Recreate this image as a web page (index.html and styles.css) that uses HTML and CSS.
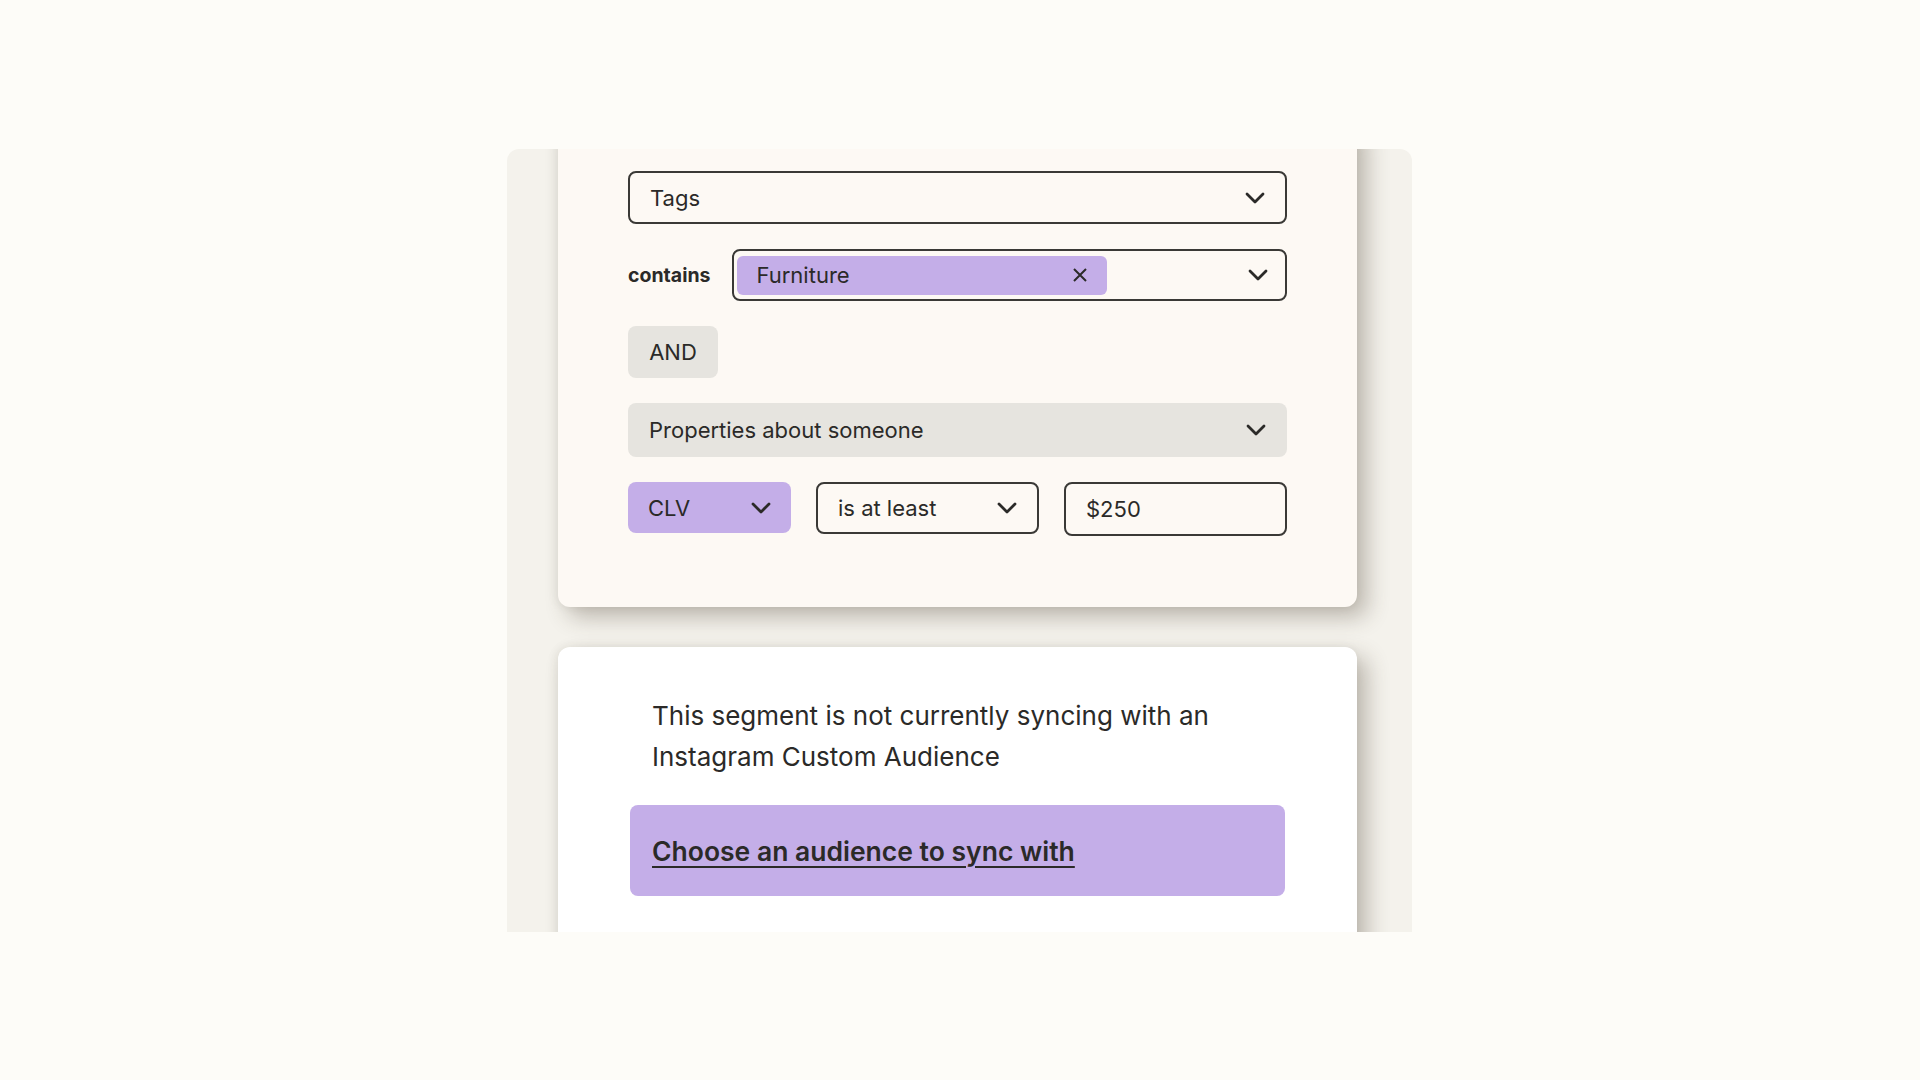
FILE: index.html
```html
<!DOCTYPE html>
<html lang="en">
<head>
<meta charset="utf-8">
<title>Segment builder</title>
<link rel="stylesheet" href="styles.css">
</head>
<body>
<div class="panel">
  <section class="card card-rules">
    <div class="select select-outline">
      <span class="select-label">Tags</span>
      <svg class="chev" viewBox="0 0 20 12"><path d="M2 2 L10 10 L18 2"/></svg>
    </div>
    <div class="contains-row">
      <span class="contains">contains</span>
      <div class="select select-outline select-chips">
        <span class="chip">
          <span class="chip-label">Furniture</span>
          <svg class="chip-x" viewBox="0 0 16 16"><path d="M2 2 L14 14 M14 2 L2 14"/></svg>
        </span>
        <svg class="chev" viewBox="0 0 20 12"><path d="M2 2 L10 10 L18 2"/></svg>
      </div>
    </div>
    <div class="and-row"><span class="and-btn">AND</span></div>
    <div class="select select-gray">
      <span class="select-label">Properties about someone</span>
      <svg class="chev" viewBox="0 0 20 12"><path d="M2 2 L10 10 L18 2"/></svg>
    </div>
    <div class="cond-row">
      <div class="select select-purple">
        <span class="select-label">CLV</span>
        <svg class="chev" viewBox="0 0 20 12"><path d="M2 2 L10 10 L18 2"/></svg>
      </div>
      <div class="select select-outline">
        <span class="select-label">is at least</span>
        <svg class="chev" viewBox="0 0 20 12"><path d="M2 2 L10 10 L18 2"/></svg>
      </div>
      <div class="input select-outline">
        <span class="select-label">$250</span>
      </div>
    </div>
  </section>
  <section class="card card-sync">
    <p class="sync-text">This segment is not currently syncing with an Instagram Custom Audience</p>
    <div class="sync-btn"><a class="sync-link" href="#">Choose an audience to sync with</a></div>
  </section>
</div>
</body>
</html>
```
FILE: styles.css
```css
* { box-sizing: border-box; }
html, body { margin: 0; padding: 0; }
body {
  background: #fdfcf8;
  font-family: Inter, "Noto Sans", "Liberation Sans", sans-serif;
  color: #2b2a28;
  width: 1920px;
  height: 1080px;
  overflow: hidden;
}
.panel {
  width: 905px;
  height: 783px;
  margin: 149px 0 0 507px;
  background: #f4f2ec;
  border-radius: 12px 12px 0 0;
  overflow: hidden;
  padding: 0 55px 0 51px;
  display: flex;
  flex-direction: column;
  gap: 40px;
}
.card {
  border-radius: 12px;
  box-shadow: 10px 10px 22px rgba(70, 60, 45, 0.32), -2px 0 10px rgba(70, 60, 45, 0.08);
  flex: none;
}
.card-rules {
  background: #fdf9f4;
  margin-top: -30px;
  padding: 52px 70px 71px;
  display: flex;
  flex-direction: column;
  gap: 25px;
}
.select, .input {
  height: 53px;
  border-radius: 8px;
  display: flex;
  align-items: center;
  justify-content: space-between;
  padding: 0 20px 0 20px;
  font-size: 22px;
}
.select-outline {
  border: 2px solid #3a3936;
  background: #fdf9f4;
}
.select-gray {
  background: #e6e4df;
  padding-left: 21px;
  padding-right: 21px;
  height: 54px;
}
.select-purple {
  background: #c4aee8;
  height: 51px;
  padding-left: 20px;
}
.chev {
  width: 20px;
  height: 12px;
  flex: none;
  fill: none;
  stroke: #2b2a28;
  stroke-width: 2.8;
  stroke-linecap: round;
  stroke-linejoin: round;
}
.contains-row {
  display: flex;
  align-items: center;
  gap: 22px;
}
.contains {
  font-size: 19.5px;
  font-weight: 700;
  color: #2b2a28;
}
.select-chips {
  flex: 1;
  height: 52px;
  padding: 0 17px 0 3px;
}
.chip {
  width: 370px;
  height: 39px;
  background: #c4aee8;
  border-radius: 6px;
  display: flex;
  align-items: center;
  justify-content: space-between;
  padding: 0 19px 0 19px;
}
.chip-x {
  width: 16px;
  height: 16px;
  fill: none;
  stroke: #2b2a28;
  stroke-width: 2;
}
.and-row { display: flex; }
.and-btn {
  width: 90px;
  height: 52px;
  background: #e6e4df;
  border-radius: 8px;
  display: flex;
  align-items: center;
  justify-content: center;
  font-size: 22px;
}
.cond-row {
  display: grid;
  grid-template-columns: 163px 1fr 1fr;
  gap: 25px;
  align-items: start;
}
.cond-row .select-outline { height: 52px; }
.cond-row .input { height: 54px; }
.card-sync {
  background: #ffffff;
  height: 340px;
  padding: 48px 72px 0;
}
.sync-text {
  margin: 0;
  padding: 0 22px;
  font-size: 26px;
  line-height: 41px;
}
.sync-btn {
  margin-top: 28px;
  height: 91px;
  background: #c4aee8;
  border-radius: 8px;
  display: flex;
  align-items: center;
  padding: 0 22px;
}
.sync-link {
  color: #2b2a28;
  font-size: 26.5px;
  font-weight: 600;
  text-decoration: underline;
  text-decoration-thickness: 2px;
  text-underline-offset: 5px;
}
```
